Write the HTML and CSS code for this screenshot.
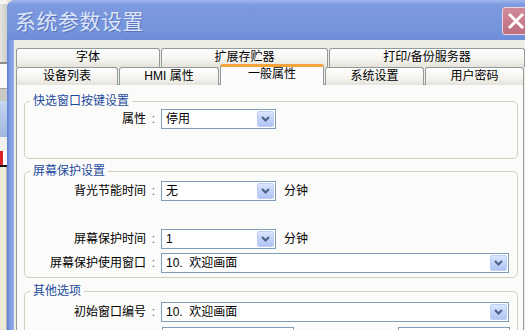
FILE: index.html
```html
<!DOCTYPE html>
<html lang="zh-CN">
  <head>
    <meta charset="UTF-8" />
    <title>系统参数设置</title>
    <link rel="stylesheet" href="styles.css">
  </head>
  <body>
    <div id="desktop">
      <!-- strip of the application behind the dialog -->
      <div class="behind">
        <div class="behind-top"></div>
        <div class="behind-bar"></div>
        <div class="behind-white"></div>
        <div class="behind-box"></div>
        <div class="behind-blue"></div>
        <div class="behind-light"></div>
        <div class="behind-icon"></div>
        <div class="behind-rest"></div>
      </div>

      <div class="window">
        <div class="titlebar">
          <span class="title">系统参数设置</span>
          <span class="close-btn">
            <svg width="18" height="18" viewBox="0 0 18 18">
              <path d="M3 3 L15 15 M15 3 L3 15" stroke="#fff" stroke-width="3" stroke-linecap="square" />
            </svg>
          </span>
        </div>

        <div class="client">
          <div class="tabrow">
            <div class="tab w-font">字体</div>
            <div class="tab w-mem">扩展存贮器</div>
            <div class="tab w-print">打印/备份服务器</div>
          </div>
          <div class="tabrow front">
            <div class="tab w-dev">设备列表</div>
            <div class="tab w-hmi">HMI 属性</div>
            <div class="tab w-gen selected">一般属性</div>
            <div class="tab w-sys">系统设置</div>
            <div class="tab w-pwd">用户密码</div>
          </div>

          <div class="panel">
            <fieldset class="group g-quick">
              <legend>快选窗口按键设置</legend>
              <div class="row first">
                <span class="lbl">属性</span><span class="colon">:</span>
                <div class="combo short">
                  <span class="value">停用</span>
                  <span class="btn"><svg width="9" height="6" viewBox="0 0 9 6"><path d="M1 1 L4.5 4.5 L8 1" fill="none" stroke="#4d6185" stroke-width="2" /></svg></span>
                </div>
              </div>
            </fieldset>

            <fieldset class="group g-saver">
              <legend>屏幕保护设置</legend>
              <div class="row first">
                <span class="lbl">背光节能时间</span><span class="colon">:</span>
                <div class="combo short">
                  <span class="value">无</span>
                  <span class="btn"><svg width="9" height="6" viewBox="0 0 9 6"><path d="M1 1 L4.5 4.5 L8 1" fill="none" stroke="#4d6185" stroke-width="2" /></svg></span>
                </div>
                <span class="unit">分钟</span>
              </div>
              <div class="row spaced">
                <span class="lbl">屏幕保护时间</span><span class="colon">:</span>
                <div class="combo short">
                  <span class="value">1</span>
                  <span class="btn"><svg width="9" height="6" viewBox="0 0 9 6"><path d="M1 1 L4.5 4.5 L8 1" fill="none" stroke="#4d6185" stroke-width="2" /></svg></span>
                </div>
                <span class="unit">分钟</span>
              </div>
              <div class="row near">
                <span class="lbl">屏幕保护使用窗口</span><span class="colon">:</span>
                <div class="combo long">
                  <span class="value">10.&nbsp; 欢迎画面</span>
                  <span class="btn"><svg width="9" height="6" viewBox="0 0 9 6"><path d="M1 1 L4.5 4.5 L8 1" fill="none" stroke="#4d6185" stroke-width="2" /></svg></span>
                </div>
              </div>
            </fieldset>

            <fieldset class="group g-other">
              <legend>其他选项</legend>
              <div class="row first">
                <span class="lbl">初始窗口编号</span><span class="colon">:</span>
                <div class="combo long">
                  <span class="value">10.&nbsp; 欢迎画面</span>
                  <span class="btn"><svg width="9" height="6" viewBox="0 0 9 6"><path d="M1 1 L4.5 4.5 L8 1" fill="none" stroke="#4d6185" stroke-width="2" /></svg></span>
                </div>
              </div>
              <div class="row near">
                <span class="lbl"></span><span class="colon"></span>
                <div class="combo mid"><span class="value"></span></div>
                <div class="combo mid right"><span class="value"></span></div>
              </div>
            </fieldset>
          </div>
        </div>
      </div>
    </div>
  </body>
</html>
```

FILE: styles.css
```css
html,
body {
  margin: 0;
  padding: 0;
}
body {
  width: 525px;
  height: 330px;
  overflow: hidden;
  font-family: "Liberation Sans", "Noto Sans CJK SC", sans-serif;
  font-size: 12px;
  color: #000;
  background: #ece9d8;
}
#desktop {
  display: flex;
  width: 525px;
  height: 330px;
  overflow: hidden;
}

/* app behind the dialog */
.behind {
  width: 7px;
  flex-shrink: 0;
  display: flex;
  flex-direction: column;
}
.behind-top {
  height: 4px;
  background: #f4f4f2;
}
.behind-bar {
  height: 58px;
  background: linear-gradient(to right, #e4e4e0, #cfcfca);
  border-bottom: 2px solid #8c8c88;
}
.behind-white {
  height: 24px;
  background: #fbfbfb;
  border-bottom: 1px solid #a0a0a0;
}
.behind-box {
  height: 12px;
  background: #c9c9c4;
}
.behind-blue {
  height: 36px;
  background: linear-gradient(#c7d6ef, #9fb6df);
}
.behind-light {
  height: 14px;
  background: #f1f1ee;
}
.behind-icon {
  height: 14px;
  background: linear-gradient(to right, #d8232a 0, #d8232a 3px, #fff 3px);
  border-bottom: 2px solid #111;
}
.behind-rest {
  flex: 1;
  background: #ece9d8;
  border-right: 1px solid #b9b7ad;
}

/* dialog */
.window {
  flex: 1;
  min-width: 0;
  overflow: hidden;
  display: flex;
  flex-direction: column;
  background: linear-gradient(to right, #5f7fd4, #7f9be0 3px, #88a2e3 5px, #9ab0e6 7px);
  border-top-left-radius: 8px;
}
.titlebar {
  flex-shrink: 0;
  height: 40px;
  display: flex;
  align-items: center;
  justify-content: space-between;
  background: linear-gradient(#9fb5ec, #7d99e0 5px, #7594dc 30px, #6e8dd8);
  border-top-left-radius: 8px;
}
.title {
  padding-left: 8px;
  font-family: "Noto Sans CJK SC", sans-serif;
  font-size: 21px;
  line-height: 24px;
  color: #dce5f8;
  text-shadow: 1px 1px 0 #5a74bd;
  letter-spacing: 0.5px;
}
.close-btn {
  flex-shrink: 0;
  width: 26px;
  height: 26px;
  margin-right: -5px;
  margin-top: 2px;
  display: flex;
  align-items: center;
  justify-content: center;
  background: linear-gradient(#d08a9a, #bf6f82);
  border: 1px solid #ecd3da;
  border-radius: 3px;
}

.client {
  flex: 1;
  margin-left: 7px;
  padding: 8px 0 0 2px;
  background: #eeede5;
}

/* tabs */
.tabrow {
  display: flex;
  height: 18px;
  gap: 1px;
}
.tab {
  flex-shrink: 0;
  box-sizing: border-box;
  height: 19px;
  border: 1px solid #919b9c;
  border-bottom: none;
  border-radius: 3px 3px 0 0;
  background: linear-gradient(#ffffff, #f4f3ee 60%, #e4e2da);
  text-align: center;
  font-size: 12px;
  line-height: 17px;
}
.tabrow.front .tab {
  height: 18px;
  line-height: 16px;
  margin-top: 1px;
}
.tabrow.front .tab.selected {
  position: relative;
  z-index: 1;
  height: 21px;
  margin-top: -2px;
  background: #fcfcfe;
  border-top: 3px solid #f4a23a;
  line-height: 15px;
}
.w-font { width: 144px; }
.w-mem { width: 167px; }
.w-print { width: 196px; }
.w-dev { width: 102px; }
.w-hmi { width: 100px; }
.w-gen { width: 104px; }
.w-sys { width: 99px; }
.w-pwd { width: 99px; }

.panel {
  width: 508px;
  box-sizing: border-box;
  height: 260px;
  border: 1px solid #919b9c;
  border-bottom: none;
  background: #fbfbf9;
  padding: 0 5px 0 7px;
}

/* group boxes */
.group {
  margin: 5px 0 0 0;
  padding: 0 0 4px 0;
  border: 1px solid #d0d0bf;
  border-radius: 5px;
  min-width: 0;
}
.group legend {
  margin-left: 5px;
  padding: 0 3px;
  font-size: 12px;
  line-height: 14px;
  color: #1d4b9e;
}
.g-quick {
  margin-top: 9px;
  padding-bottom: 29px;
}
.g-other {
  margin-top: 6px;
}

.row {
  display: flex;
  align-items: center;
  height: 20px;
}
.row.first { margin-top: 3px; }
.g-quick .row.first { margin-top: 1px; }
.g-other .row.first { margin-top: 4px; }
.row.spaced { margin-top: 28px; }
.row.near { margin-top: 4px; }
.g-other .row.near { margin-top: 5px; }

.lbl {
  width: 121px;
  text-align: right;
  line-height: 14px;
}
.colon {
  width: 15px;
  text-align: center;
  color: #555;
}

.combo {
  flex-shrink: 0;
  box-sizing: border-box;
  height: 20px;
  display: flex;
  align-items: center;
  justify-content: space-between;
  border: 1px solid #7f9db9;
  background: #fff;
}
.combo.short { width: 115px; }
.combo.long { width: 348px; }
.combo.mid { width: 132px; margin-left: 1px; }
.combo.mid.right { width: 112px; margin-left: 104px; }
.value {
  padding-left: 4px;
  line-height: 14px;
  white-space: nowrap;
}
.btn {
  width: 17px;
  height: 16px;
  margin-right: 1px;
  box-sizing: border-box;
  display: flex;
  align-items: center;
  justify-content: center;
  border: 1px solid #bccdf6;
  border-radius: 2px;
  background: linear-gradient(#dbe6fd, #c2d3fa 50%, #b2c6f4);
}
.unit {
  margin-left: 8px;
  line-height: 14px;
}
```
